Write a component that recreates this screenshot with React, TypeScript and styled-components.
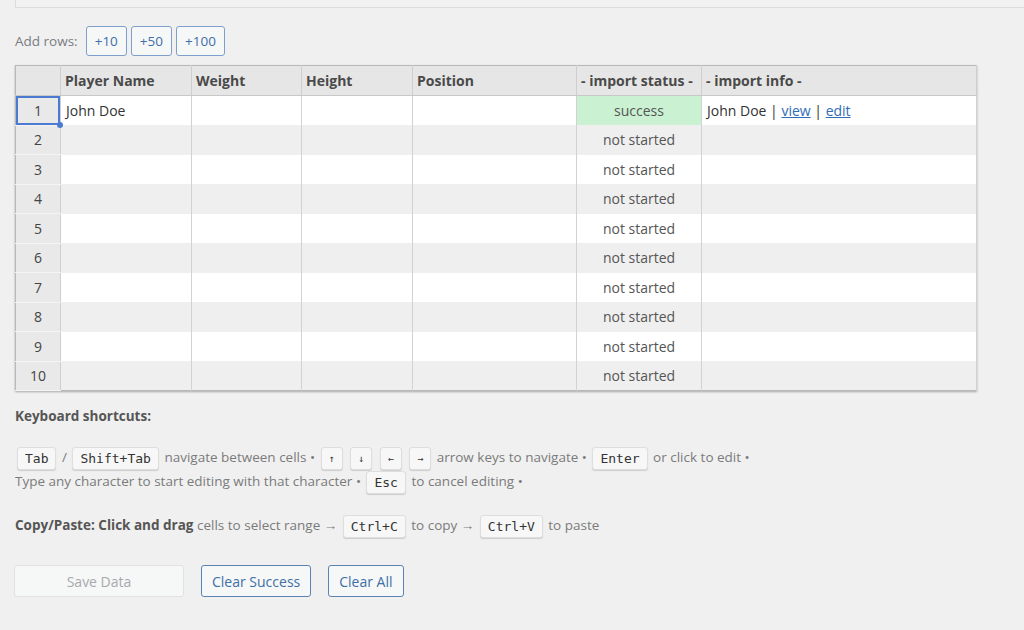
import React from 'react'
import styled, { createGlobalStyle } from 'styled-components'

const GlobalStyle = createGlobalStyle`
  html, body {
    margin: 0;
    padding: 0;
    background: #f0f0f0;
    font-family: "Open Sans", "Noto Sans", sans-serif;
  }
`

type Row = {
  name: string
  status: 'success' | 'not started'
  info?: string
}

const rows: Row[] = [
  { name: 'John Doe', status: 'success', info: 'John Doe' },
  ...Array.from({ length: 9 }, () => ({ name: '', status: 'not started' as const })),
]

const columns = [
  { label: '', width: 45 },
  { label: 'Player Name', width: 131 },
  { label: 'Weight', width: 110 },
  { label: 'Height', width: 111 },
  { label: 'Position', width: 164 },
  { label: '- import status -', width: 125 },
  { label: '- import info -', width: 275 },
]

export default function App() {
  return (
    <Page>
      <GlobalStyle />
      <TopPanel />

      <AddRows>
        <AddLabel>Add rows:</AddLabel>
        <SmallButton>+10</SmallButton>
        <SmallButton>+50</SmallButton>
        <SmallButton>+100</SmallButton>
      </AddRows>

      <Grid>
        <colgroup>
          {columns.map((c, i) => (
            <col key={i} style={{ width: c.width }} />
          ))}
        </colgroup>
        <thead>
          <tr>
            {columns.map((c, i) => (
              <HeadCell key={i}>{c.label}</HeadCell>
            ))}
          </tr>
        </thead>
        <tbody>
          {rows.map((row, i) => (
            <BodyRow key={i} $odd={i % 2 === 1}>
              <RowNum $selected={i === 0}>
                {i + 1}
                {i === 0 && <FillHandle />}
              </RowNum>
              <Cell>{row.name}</Cell>
              <Cell />
              <Cell />
              <Cell />
              <StatusCell $success={row.status === 'success'}>{row.status}</StatusCell>
              <Cell>
                {row.info && (
                  <>
                    {row.info} | <Link href="#">view</Link> | <Link href="#">edit</Link>
                  </>
                )}
              </Cell>
            </BodyRow>
          ))}
        </tbody>
      </Grid>

      <Heading>Keyboard shortcuts:</Heading>

      <Shortcuts>
        <Line>
          <Kbd>Tab</Kbd> / <Kbd>Shift+Tab</Kbd> navigate between cells • <Kbd $small>↑</Kbd>{' '}
          <Kbd $small>↓</Kbd> <Kbd $small>←</Kbd> <Kbd $small>→</Kbd> arrow keys to navigate •{' '}
          <Kbd>Enter</Kbd> or click to edit •
        </Line>
        <Line>
          Type any character to start editing with that character • <Kbd>Esc</Kbd> to cancel editing •
        </Line>
      </Shortcuts>

      <CopyLine>
        <strong>Copy/Paste: Click and drag</strong> cells to select range → <Kbd>Ctrl+C</Kbd> to copy →{' '}
        <Kbd>Ctrl+V</Kbd> to paste
      </CopyLine>

      <Actions>
        <SaveButton disabled>Save Data</SaveButton>
        <OutlineButton>Clear Success</OutlineButton>
        <OutlineButton>Clear All</OutlineButton>
      </Actions>
    </Page>
  )
}

const Page = styled.div`
  width: 1024px;
  height: 630px;
  overflow: hidden;
  background: #f0f0f0;
  color: #3c434a;
`

const TopPanel = styled.div`
  height: 7px;
  margin-left: 15px;
  background: #f2f2f2;
  border-left: 1px solid #dcdcde;
  border-bottom: 1px solid #dcdcde;
`

const AddRows = styled.div`
  display: flex;
  align-items: center;
  gap: 4px;
  margin: 18px 0 0 15px;
  height: 30px;
`

const AddLabel = styled.span`
  font-size: 13.5px;
  color: #787c82;
  margin-right: 4px;
`

const SmallButton = styled.button`
  height: 30px;
  padding: 0 8px;
  font-family: inherit;
  font-size: 13.5px;
  color: #3f6fa8;
  background: #f6f7f7;
  border: 1px solid #7e9fcb;
  border-radius: 3px;
  cursor: pointer;
`

const Grid = styled.table`
  margin: 9px 0 0 15px;
  width: 961px;
  table-layout: fixed;
  border-collapse: collapse;
  border: 1px solid #b8b8b8;
  box-shadow: 0 1px 2px rgba(0, 0, 0, 0.3);
  font-size: 14px;
`

const HeadCell = styled.th`
  height: 29px;
  padding: 0 4px;
  text-align: left;
  font-weight: 700;
  color: #4a4a4a;
  background: #e6e6e6;
  border-right: 1px solid #cfcfcf;
  border-bottom: 1px solid #c8c8c8;
  white-space: nowrap;
  overflow: hidden;
`

const BodyRow = styled.tr<{ $odd: boolean }>`
  height: 29.5px;
  background: ${p => (p.$odd ? '#efefef' : '#ffffff')};
`

const RowNum = styled.td<{ $selected: boolean }>`
  position: relative;
  padding: 0;
  text-align: center;
  color: #444;
  background: #e9e9e9;
  border-right: 1px solid #cfcfcf;
  border-bottom: 1px solid #f4f4f4;
  box-shadow: ${p => (p.$selected ? 'inset 0 0 0 2px #4a7bd0' : 'none')};
`

const FillHandle = styled.span`
  position: absolute;
  right: -3px;
  bottom: -3px;
  width: 6px;
  height: 6px;
  border-radius: 50%;
  background: #4a7bd0;
  z-index: 2;
`

const Cell = styled.td`
  padding: 0 5px;
  color: #333;
  border-right: 1px solid #d2d2d2;
  white-space: nowrap;
  overflow: hidden;
`

const StatusCell = styled.td<{ $success: boolean }>`
  padding: 0 4px;
  text-align: center;
  color: #555;
  border-right: 1px solid #d2d2d2;
  background: ${p => (p.$success ? '#c9f1d2' : 'transparent')};
`

const Link = styled.a`
  color: #2f6db5;
  text-decoration: underline;
`

const Heading = styled.div`
  margin: 16px 0 0 15px;
  font-size: 13.5px;
  font-weight: 700;
  color: #555;
`

const Shortcuts = styled.div`
  margin: 20px 0 0 15px;
  font-size: 13.5px;
  color: #7b7b7b;
`

const Line = styled.div`
  height: 24px;
  line-height: 24px;
  white-space: nowrap;
`

const Kbd = styled.kbd<{ $small?: boolean }>`
  display: inline-block;
  box-sizing: border-box;
  margin: 0 2px;
  padding: 0 7px;
  height: 23px;
  line-height: 21px;
  vertical-align: middle;
  font-family: "DejaVu Sans Mono", "Liberation Mono", monospace;
  font-size: ${p => (p.$small ? '10px' : '13px')};
  color: #333;
  background: #f7f7f7;
  border: 1px solid #dedede;
  border-radius: 3px;
  box-shadow: 0 1px 1px rgba(0, 0, 0, 0.15);
`

const CopyLine = styled.div`
  margin: 20px 0 0 15px;
  height: 24px;
  line-height: 24px;
  font-size: 13.5px;
  color: #7b7b7b;

  strong {
    color: #555;
  }
`

const Actions = styled.div`
  display: flex;
  gap: 17px;
  margin: 28px 0 0 14px;
`

const BaseButton = styled.button`
  height: 32px;
  font-family: inherit;
  font-size: 14px;
  border-radius: 3px;
  background: #f6f7f7;
  cursor: pointer;
`

const SaveButton = styled(BaseButton)`
  width: 170px;
  color: #a7aaad;
  border: 1px solid #e2e2e2;
  cursor: default;
`

const OutlineButton = styled(BaseButton)`
  padding: 0 10px;
  color: #3e6fa6;
  border: 1px solid #5b82b3;
`
